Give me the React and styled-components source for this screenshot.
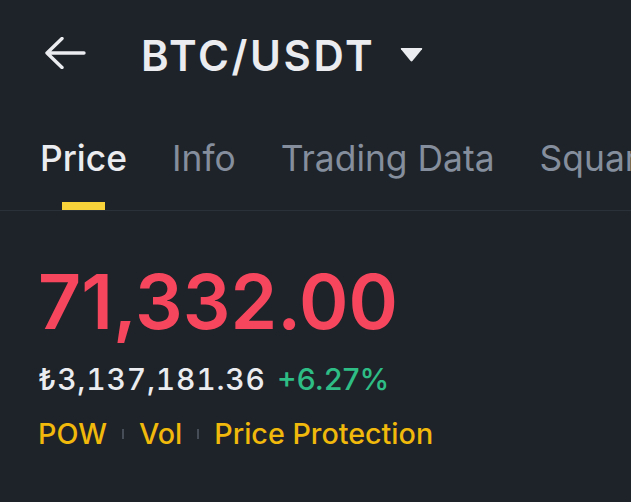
import React from 'react';
import styled, { createGlobalStyle } from 'styled-components';

const colors = {
  bg: "#1E2329",
  ink: "#EAECEF",
  sub: "#848E9C",
  line: "#2B3139",
  brand: "#F0B90B",
  indicator: "#F8D33A",
  red: "#F6465D",
  green: "#2EBD85",
  sep: "#474D57",
};

const GlobalStyle = createGlobalStyle`
  html, body { margin: 0; padding: 0; background: ${colors.bg}; }
  body { font-family: Inter, "Noto Sans", sans-serif; color: ${colors.ink}; overflow: hidden; }
`;

const Page = styled.div`
  width: 631px;
  height: 502px;
  background: ${colors.bg};
  overflow: hidden;
`;

const Header = styled.div`
  display: flex;
  align-items: center;
  height: 42px;
  padding: 35px 0 0 44px;
`;

const BackButton = styled.div`
  display: flex;
  margin: 0 55px 7px 0;
`;

const Title = styled.div`
  font-size: 42px;
  line-height: 42px;
  font-weight: 600;
  letter-spacing: 2.6px;
`;

const Caret = styled.div`
  display: flex;
  margin: 0 0 4px 25px;
`;

const Tabs = styled.div`
  display: flex;
  gap: 45px;
  padding: 64px 0 0 40px;
  border-bottom: 1px solid ${colors.line};
  white-space: nowrap;
`;

const Tab = styled.div`
  display: flex;
  flex-direction: column;
  align-items: center;
  font-size: 35.4px;
  line-height: 36px;
  font-weight: ${(p) => (p.$active ? 500 : 400)};
  color: ${(p) => (p.$active ? colors.ink : colors.sub)};
`;

const Indicator = styled.div`
  width: 43px;
  height: 8px;
  margin-top: 25px;
  background: ${(p) => (p.$active ? colors.indicator : "transparent")};
`;

const Body = styled.div`
  padding: 53px 0 0 38px;
`;

const LastPrice = styled.div`
  font-size: 75px;
  line-height: 76px;
  font-weight: 600;
  color: ${colors.red};
`;

const SubLine = styled.div`
  display: flex;
  gap: 11px;
  margin-top: 24px;
  font-size: 30px;
  line-height: 30px;
  font-weight: 500;
`;

const Fiat = styled.span`
  color: ${colors.ink};
  font-variant-numeric: tabular-nums;
  letter-spacing: 0.8px;
`;

const Change = styled.span`
  color: ${colors.green};
`;

const Tags = styled.div`
  display: flex;
  align-items: center;
  margin-top: 25px;
  font-size: 28.7px;
  line-height: 29px;
  font-weight: 500;
  color: ${colors.brand};
`;

const Sep = styled.span`
  width: 2px;
  height: 10px;
  margin: 0 15px;
  background: ${colors.sep};
`;

function BackArrow() {
  return (
    <svg width="42" height="32" viewBox="0 0 42 32" fill="none">
      <path d="M3 16H40M18 1.5L3 16L18 30.5" stroke={colors.ink} strokeWidth="3.4" strokeLinecap="round" strokeLinejoin="round" />
    </svg>
  );
}

function CaretDown() {
  return (
    <svg width="23" height="15" viewBox="0 0 23 15">
      <path d="M1.5 1H21.5Q22.8 1 22 2.2L12.6 13.8Q11.5 15 10.4 13.8L1 2.2Q0.2 1 1.5 1Z" fill={colors.ink} />
    </svg>
  );
}

const tabs = ["Price", "Info", "Trading Data", "Square"];

export default function App() {
  return (
    <Page>
      <GlobalStyle />
      <Header>
        <BackButton><BackArrow /></BackButton>
        <Title>BTC/USDT</Title>
        <Caret><CaretDown /></Caret>
      </Header>
      <Tabs>
        {tabs.map((t, i) => (
          <Tab key={t} $active={i === 0}>
            {t}
            <Indicator $active={i === 0} />
          </Tab>
        ))}
      </Tabs>
      <Body>
        <LastPrice>71,332.00</LastPrice>
        <SubLine>
          <Fiat>₺3,137,181.36</Fiat>
          <Change>+6.27%</Change>
        </SubLine>
        <Tags>
          <span>POW</span>
          <Sep />
          <span>Vol</span>
          <Sep />
          <span>Price Protection</span>
        </Tags>
      </Body>
    </Page>
  );
}
